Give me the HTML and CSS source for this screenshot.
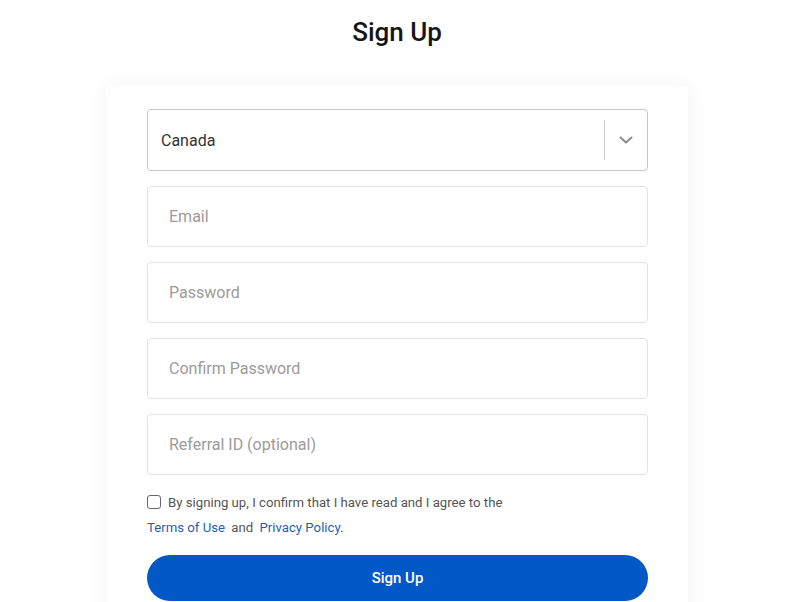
FILE: index.html
```html
<!DOCTYPE html>
<html>
<head>
<meta charset="utf-8">
<link rel="stylesheet" href="styles.css">
</head>
<body>
<div class="page">
  <h1 class="title">Sign Up</h1>
  <div class="card">
    <div class="select">
      <span class="select-value">Canada</span>
      <span class="select-sep"></span>
      <span class="select-arrow">
        <svg width="14" height="8" viewBox="0 0 14 8"><path d="M1.5 1.5 L7 6.5 L12.5 1.5" fill="none" stroke="#8a8a8a" stroke-width="2" stroke-linecap="round" stroke-linejoin="round"/></svg>
      </span>
    </div>
    <div class="field">Email</div>
    <div class="field">Password</div>
    <div class="field">Confirm Password</div>
    <div class="field">Referral ID (optional)</div>
    <div class="agree">
      <div class="agree-line"><span class="checkbox"></span><span>By signing up, I confirm that I have read and I agree to the</span></div>
      <div class="agree-links"><a class="link">Terms of Use</a> and <a class="link">Privacy Policy.</a></div>
    </div>
    <div class="button">Sign Up</div>
  </div>
</div>
</body>
</html>
```

FILE: styles.css
```css
* { box-sizing: border-box; }
html, body { margin: 0; padding: 0; background: #fff; }
body { font-family: Roboto, "Liberation Sans", sans-serif; overflow: hidden; height: 602px; }
.page { width: 794px; display: flex; flex-direction: column; align-items: center; }
.title { margin: 16px 0 0; font-size: 26px; font-weight: 500; line-height: 32px; color: #151515; height: 32px; }
.card {
  margin-top: 38px;
  width: 582px;
  background: #fff;
  padding: 23px 40px 20px 41px;
  box-shadow: 0 0 24px rgba(0,0,0,0.05);
  border-radius: 4px;
  display: flex;
  flex-direction: column;
  gap: 15px;
}
.select {
  height: 62px;
  border: 1px solid #c6c6c6;
  border-radius: 4px;
  display: flex;
  align-items: center;
  padding-left: 13px;
}
.select-value { flex: 1; font-size: 16px; color: #333; }
.select-sep { width: 1px; height: 40px; background: #cfcfcf; }
.select-arrow { width: 42px; display: flex; justify-content: center; align-items: center; }
.field {
  height: 61px;
  border: 1px solid #e2e2e2;
  border-radius: 4px;
  display: flex;
  align-items: center;
  padding-left: 21px;
  font-size: 16px;
  color: #9b9b9b;
}
.agree { margin-top: 2px; font-size: 13.2px; color: #555; }
.agree-line { display: flex; align-items: center; gap: 7px; height: 20px; }
.checkbox { width: 14px; height: 14px; border: 1px solid #666; border-radius: 3px; background: #fff; flex: none; }
.agree-links { margin-top: 6px; line-height: 20px; word-spacing: 3px; }
.link { color: #1f5fae; word-spacing: 0; }
.button {
  margin-top: 2px;
  height: 46px;
  border-radius: 23px;
  background: #0358c8;
  color: #fff;
  font-size: 15px;
  font-weight: 500;
  display: flex;
  align-items: center;
  justify-content: center;
}
```
